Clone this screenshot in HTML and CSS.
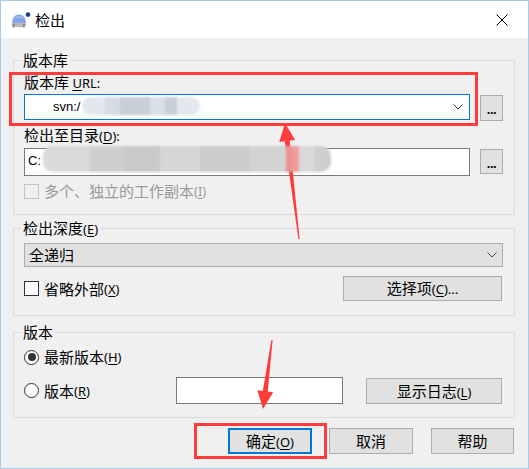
FILE: index.html
```html
<!DOCTYPE html>
<html lang="zh-CN">
<head>
<meta charset="utf-8">
<title>检出</title>
<link rel="stylesheet" href="styles.css">
</head>
<body>
<div class="window">
  <div class="titlebar">
    <svg class="app-icon" width="21" height="17" viewBox="0 0 21 17">
      <ellipse cx="9" cy="13.5" rx="7.5" ry="2.8" fill="#b9b9b9"/>
      <rect x="2.5" y="13" width="2.5" height="3.5" rx="1" fill="#8e8e8e"/>
      <rect x="12.5" y="13" width="2.5" height="3.5" rx="1" fill="#8e8e8e"/>
      <path d="M2 12 Q2.5 3.5 9 3.5 Q15.5 3.5 16 12 Z" fill="#86a3e8"/>
      <path d="M4.5 7 Q9 4.5 13.5 7" stroke="#b8cbf4" stroke-width="1" fill="none"/>
      <circle cx="18" cy="3.6" r="2.3" fill="#1d3f8f"/>
    </svg>
    <span class="title">检出</span>
    <svg class="close" width="12" height="12" viewBox="0 0 12 12">
      <path d="M0.5 0.5 L11.5 11.5 M11.5 0.5 L0.5 11.5" stroke="#000" stroke-width="1"/>
    </svg>
  </div>

  <div class="content">
    <fieldset class="grp g-repo">
      <legend>版本库</legend>
      <div class="lbl">版本库 <span class="lt"><u>U</u>RL:</span></div>
      <div class="row row-url">
        <div class="combo combo-url">
          <span class="val lt-in">svn:/</span>
          <span class="mosaic mosaic-url"></span>
          <svg class="chev" width="10" height="6" viewBox="0 0 10 6"><polyline points="0.5,0.5 5,5 9.5,0.5" fill="none" stroke="#333" stroke-width="1"/></svg>
        </div>
        <button class="btn dots">...</button>
      </div>
      <div class="lbl lbl-dir">检出至目录<span class="lt">(<u>D</u>):</span></div>
      <div class="row row-dir">
        <div class="edit edit-dir">
          <span class="val lt-in">C:</span>
          <span class="mosaic mosaic-dir"></span>
        </div>
        <button class="btn dots dots-dir">...</button>
      </div>
      <div class="chk disabled">
        <span class="box"></span>多个、独立的工作副本<span class="lt">(<u>I</u>)</span>
      </div>
    </fieldset>

    <fieldset class="grp g-depth">
      <legend>检出深度<span class="lt">(<u>E</u>)</span></legend>
      <div class="combo combo-depth">
        <span class="val">全递归</span>
        <svg class="chev" width="10" height="6" viewBox="0 0 10 6"><polyline points="0.5,0.5 5,5 9.5,0.5" fill="none" stroke="#444" stroke-width="1"/></svg>
      </div>
      <div class="row row-opt">
        <div class="chk">
          <span class="box"></span>省略外部<span class="lt">(<u>X</u>)</span>
        </div>
        <button class="btn btn-opt">选择项<span class="lt">(<u>C</u>)...</span></button>
      </div>
    </fieldset>

    <fieldset class="grp g-rev">
      <legend>版本</legend>
      <div class="chk">
        <span class="radio on"><span class="dot"></span></span>最新版本<span class="lt">(<u>H</u>)</span>
      </div>
      <div class="row row-rev">
        <div class="chk rev-lbl">
          <span class="radio"></span>版本<span class="lt">(<u>R</u>)</span>
        </div>
        <div class="edit edit-rev"></div>
        <button class="btn btn-log">显示日志<span class="lt">(<u>L</u>)</span></button>
      </div>
    </fieldset>

    <div class="actions">
      <button class="btn act default">确定<span class="lt">(<u>O</u>)</span></button>
      <button class="btn act">取消</button>
      <button class="btn act help">帮助</button>
    </div>
  </div>

  <div class="hl hl-url"></div>
  <div class="hl hl-ok"></div>
  <svg class="annot" width="529" height="469" viewBox="0 0 529 469">
    <polygon fill="#ff3b3b" points="285,123 295.1,139.9 289.7,140.6 299.6,239 298.4,239 284.7,141.2 279.3,141.9"/>
    <polygon fill="#ff3b3b" points="263,409 273.2,392.2 267.8,391.5 272.6,340.1 271.4,339.9 262.8,390.9 257.4,390.2"/>
  </svg>
</div>
</body>
</html>
```

FILE: styles.css
```css
* { box-sizing: border-box; }

body {
  margin: 0;
  font-family: "Noto Sans CJK SC", "Noto Sans", sans-serif;
  font-size: 15px;
  color: #000;
  background: #fff;
}

.window {
  position: relative;
  width: 529px;
  height: 469px;
  border: 1px solid #a9cbe9;
  background: #f0f0f0;
  overflow: hidden;
}

.titlebar {
  height: 37px;
  background: #fff;
  display: flex;
  align-items: center;
  padding: 0 20px 0 9px;
}

.app-icon { display: block; }

.title {
  margin-left: 4px;
  line-height: 20px;
  font-size: 15px;
}

.close {
  margin-left: auto;
  display: block;
}

.content {
  padding: 14px 13px 0 12px;
}

.grp {
  margin: 0;
  min-width: 0;
  border: 1px solid #dcdcdc;
  padding: 4px 11px 13px 10px;
}

.grp legend {
  padding: 0 2px;
  margin-left: -3px;
  line-height: 16px;
  font-size: 15px;
}

.g-depth {
  margin-top: 5px;
  padding-top: 6px;
  padding-bottom: 14px;
}

.g-rev {
  margin-top: 8px;
  padding-top: 7px;
  padding-bottom: 13px;
}

.lt {
  font-family: "Noto Sans", sans-serif;
  font-size: 13px;
}

.lt u, .chk u, legend u {
  text-underline-offset: 2px;
}

.lt-in {
  font-family: "Liberation Sans", sans-serif;
  font-size: 13px;
}

.lbl {
  height: 20px;
  line-height: 20px;
}

.row {
  display: flex;
}

.row-url {
  margin-top: 2px;
  height: 27px;
}

.lbl-dir { margin-top: 4px; }

.row-dir {
  margin-top: 3px;
  height: 28px;
}

.combo {
  position: relative;
  display: flex;
  align-items: center;
  height: 26px;
  line-height: 20px;
}

.combo-url {
  flex: 1;
  background: #fff;
  border: 1px solid #0078d7;
}

.combo-url .val { padding-left: 28px; }

.chev {
  display: block;
  margin-left: auto;
  margin-right: 6px;
}

.combo-depth {
  height: 24px;
  background: #e1e1e1;
  border: 1px solid #adadad;
  padding-left: 4px;
}

.combo-depth .chev { margin-right: 5px; }

.edit {
  position: relative;
  background: #fff;
  border: 1px solid #7a7a7a;
}

.edit-dir {
  flex: 1;
  height: 28px;
  line-height: 20px;
  padding-left: 3px;
}

.mosaic {
  position: absolute;
  filter: blur(1.2px);
}

.mosaic-url {
  left: 57px;
  top: 2px;
  width: 118px;
  height: 18px;
  border-radius: 9px;
  background: linear-gradient(to right,
    #e3e8ee 0, #e3e8ee 23px,
    #d6dce4 23px, #d6dce4 38px,
    #c8cfd8 38px, #c8cfd8 68px,
    #d9dfe6 68px, #d9dfe6 83px,
    #c9d0d9 83px, #c9d0d9 95px,
    #e3e8ee 95px, #e3e8ee 118px);
}

.mosaic-dir {
  left: 18px;
  top: -3px;
  width: 288px;
  height: 26px;
  border-radius: 10px;
  z-index: 6;
  background: linear-gradient(to right,
    #dadada 0, #dadada 47px,
    #cfcfcf 47px, #cfcfcf 82px,
    #c9c9c9 82px, #c9c9c9 117px,
    #d5d5d5 117px, #d5d5d5 157px,
    #cccccc 157px, #cccccc 207px,
    #d3d3d3 207px, #d3d3d3 243px,
    #e98d8d 243px, #f2a2a2 256px,
    #d9d9d9 256px, #d9d9d9 272px,
    #cfcfcf 272px, #cfcfcf 288px);
}

.btn {
  font-family: "Noto Sans CJK SC", "Noto Sans", sans-serif;
  font-size: 15px;
  color: #000;
  background: #e1e1e1;
  border: 1px solid #adadad;
  padding: 0;
  margin: 0;
  line-height: 20px;
}

.dots {
  width: 23px;
  height: 26px;
  margin: 1px 0 0 10px;
  font-family: "Noto Sans", sans-serif;
  font-size: 13px;
  font-weight: bold;
  letter-spacing: -0.5px;
  padding-top: 2px;
}

.dots-dir { height: 25px; }

.chk {
  display: flex;
  align-items: center;
  height: 20px;
  line-height: 20px;
  white-space: nowrap;
}

.g-repo .chk { margin-top: 5px; }

.box {
  width: 15px;
  height: 15px;
  border: 1px solid #333;
  background: #fff;
  margin-right: 5px;
  flex: none;
}

.chk.disabled { color: #9a9a9a; }
.chk.disabled .box {
  border-color: #c4c4c4;
  background: #f0f0f0;
}

.row-opt {
  margin-top: 9px;
  height: 25px;
  align-items: center;
}

.btn-opt {
  margin-left: auto;
  margin-right: 1px;
  width: 159px;
  height: 25px;
}

.radio {
  width: 15px;
  height: 15px;
  border-radius: 50%;
  border: 1px solid #333;
  background: #fff;
  margin-right: 5px;
  flex: none;
  display: flex;
  align-items: center;
  justify-content: center;
}

.radio .dot {
  width: 8px;
  height: 8px;
  border-radius: 50%;
  background: #333;
}

.row-rev {
  margin-top: 10px;
  height: 27px;
  align-items: center;
}

.rev-lbl { width: 152px; }

.edit-rev {
  width: 167px;
  height: 27px;
}

.btn-log {
  width: 136px;
  height: 26px;
  margin-left: 23px;
  align-self: flex-start;
  margin-top: 1px;
}

.actions {
  display: flex;
  justify-content: flex-end;
  margin-top: 10px;
  padding-right: 1px;
}

.act {
  width: 84px;
  height: 26px;
  margin-left: 17px;
}

.act.help {
  width: 83px;
  margin-left: 18px;
}

.act.default {
  border: 2px solid #0078d7;
}

.hl {
  position: absolute;
  border: 3px solid #ff3b3b;
  z-index: 4;
}

.hl-url {
  left: 8px;
  top: 71px;
  width: 469px;
  height: 54px;
}

.hl-ok {
  left: 193px;
  top: 422px;
  width: 133px;
  height: 36px;
}

.annot {
  position: absolute;
  left: -1px;
  top: -1px;
  z-index: 5;
  pointer-events: none;
}
```
